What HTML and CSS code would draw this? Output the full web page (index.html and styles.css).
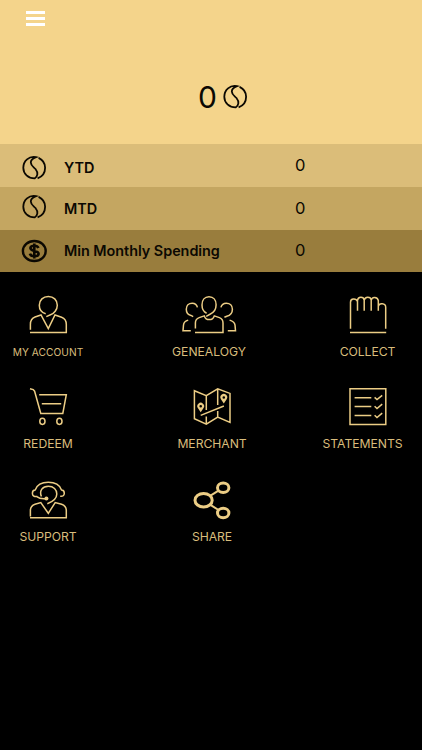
FILE: index.html
```
<!DOCTYPE html>
<html lang="en">
<head>
    <meta charset="UTF-8">
    <meta name="viewport" content="width=device-width, initial-scale=1.0">
    <title>Rewards</title>
    <link rel="stylesheet" href="styles.css">
</head>
<body>
    <!-- coin shared by the balance and the first two rows -->
    <svg width="0" height="0" class="defs">
        <symbol id="coin" viewBox="0 0 26 26">
            <path d="M15 2.2C8 .8 2.3 6 2.3 12.8C2.3 19 7.2 23.4 13.6 23.4C16.8 21.4 17.4 17.6 14.6 14.2C12.2 11.8 9.8 10.6 9.8 7.6C9.8 5.2 11.5 3.6 15 2.2Z"/>
            <path d="M17.6 2.9C21.6 4.8 24.1 8.3 24.1 12.8C24.1 17.8 21 21.8 16.6 23.4"/>
        </symbol>
    </svg>

    <header class="header">
        <button class="menu-btn" aria-label="Menu">
            <span></span>
            <span></span>
            <span></span>
        </button>
        <div class="balance">
            <span class="balance-value">0</span>
            <svg class="coin"><use href="#coin"/></svg>
        </div>
    </header>

    <section class="stats">
        <div class="stat ytd">
            <svg class="coin"><use href="#coin"/></svg>
            <span class="stat-name">YTD</span>
            <span class="stat-value">0</span>
        </div>
        <div class="stat mtd">
            <svg class="coin"><use href="#coin"/></svg>
            <span class="stat-name">MTD</span>
            <span class="stat-value">0</span>
        </div>
        <div class="stat spending">
            <svg class="coin" viewBox="0 0 26 26">
                <ellipse cx="13.3" cy="13" rx="11.4" ry="10" stroke-width="2.4"/>
                <path stroke-width="2.6" d="M17.4 10C16.8 8.3 15.4 7.7 13.3 7.7C10.9 7.7 9.4 8.6 9.4 10.1C9.4 13.9 17.6 12 17.6 15.7C17.6 17.4 15.8 18.3 13.3 18.3C10.9 18.3 9.4 17.5 8.9 15.7M13.3 5.6V20.4"/>
            </svg>
            <span class="stat-name">Min Monthly Spending</span>
            <span class="stat-value">0</span>
        </div>
    </section>

    <nav class="menu">
        <a class="item small">
            <svg viewBox="0 0 56 44">
                <path d="M25.7 21.8C21.8 20.6 19.3 17.2 19.3 13.2C19.3 8 23.2 4.4 28.3 4.4C33.5 4.4 37.3 8 37.3 13.2C37.3 17.6 34 21.6 30.5 22.8L26.3 24.6"/>
                <path d="M10.4 37.7V32.5C10.4 28 12 26 15 25L21 23L28.3 36.7L35 23L41.6 25.2C44.8 26.3 46.3 28.4 46.3 32.5V40.6H10"/>
            </svg>
            <span>MY ACCOUNT</span>
        </a>
        <a class="item genealogy">
            <svg viewBox="0 0 56 44">
                <path d="M25.6 21.2C22.6 19.8 21 16.4 21 13C21 8.2 23.7 4.8 28 4.8C32.4 4.8 35.1 8.2 35.1 12.8C35.1 17.5 32 21 29 22.3L25.2 24.3"/>
                <path d="M14.4 36.6V31C14.4 28 15.5 26.5 18.2 25.6L23.3 23.9C25 28.8 31.5 28.8 33.3 23.9L38.4 25.6C41 26.6 42 28 42 31V40.4H14"/>
                <path d="M16.4 15.4C15.8 12.6 13.8 11.2 11.2 11.2C7.8 11.2 5.3 13.6 5.3 17.2C5.3 20.4 7 22.8 10 23.4L12.2 24.6M7.2 28.1C4 29 2.8 30.3 2.5 33L2 38.7H9.8"/>
                <path d="M39.9 15.4C40.6 12.6 42.6 11.2 45.3 11.2C48.9 11.2 51.4 13.6 51.4 17.2C51.4 21 49 23.4 45.8 24.2L43.4 25.3M48.6 28.1C52.2 29.3 53.7 30.3 54 33L54.5 38.7H46.8"/>
            </svg>
            <span>GENEALOGY</span>
        </a>
        <a class="item collect">
            <svg viewBox="0 0 56 44">
                <path d="M10.5 36.7V10.2C10.5 6.4 16 6 17.5 9.5V18.7V8.5C18 4.2 23.5 4.2 24.2 8V18.7V8.3C24.8 4.2 30.6 4.2 31.2 8V18.7V8.3C31.8 4.2 37.6 4.6 38.3 8.5V18.7V14.3C39 10.8 45.7 11 45.7 15.2V36.7"/>
                <path d="M10 40.4H46.2"/>
            </svg>
            <span>COLLECT</span>
        </a>
        <a class="item">
            <svg viewBox="0 0 56 44">
                <path d="M10 4.8L13.2 5.6L14.6 7.2L20.8 29.4H42.8L46.3 10.7H19.2M21.8 19.8H41.2"/>
                <ellipse cx="22.4" cy="37.3" rx="2.6" ry="3.1"/>
                <ellipse cx="39.4" cy="37.3" rx="2.6" ry="3.1"/>
            </svg>
            <span>REDEEM</span>
        </a>
        <a class="item">
            <svg viewBox="0 0 56 44">
                <path d="M10.4 6.7L22.3 11.7L33.7 4.8L46 9.4V38.4L33.7 33L22.3 40.2L10.4 34.7ZM22.3 11.7V26M22.3 32.5V40M33.7 4.8V21M33.7 27V33M16.7 31.4L39.9 22"/>
                <path class="pin" d="M16.7 28.3L14 24.2A3.4 3.4 0 1 1 19.4 24.2ZM15.4 22.3A1.3 1.3 0 1 0 18 22.3A1.3 1.3 0 1 0 15.4 22.3Z"/>
                <path class="pin" d="M39.8 19.5L37.1 15.4A3.4 3.4 0 1 1 42.5 15.4ZM38.5 13.5A1.3 1.3 0 1 0 41.1 13.5A1.3 1.3 0 1 0 38.5 13.5Z"/>
            </svg>
            <span>MERCHANT</span>
        </a>
        <a class="item statements">
            <svg viewBox="0 0 56 44">
                <path d="M10 4.7H45.8V40.4H10ZM14.6 13.7H31.3M14.6 22.4H31.3M14.6 31.4H31.3"/>
                <path d="M34.6 13.4L37 15.6L42.2 11.3M34.6 22.3L37 24.5L42.2 20.2M34.6 31.3L37 33.5L42.2 29.2"/>
            </svg>
            <span>STATEMENTS</span>
        </a>
        <a class="item">
            <svg viewBox="0 0 56 44">
                <path d="M10.4 39.5V33.6C10.4 30 12 28.2 15 27.2L20.8 25.6L28.3 36.3L35.2 25.6L41.6 27.3C44.8 28.4 46.3 30.2 46.3 33.6V40.7H10"/>
                <path d="M21.4 19.5C19 13.5 22.5 9.3 28.4 9.3C33.6 9.3 36.8 12.7 36.8 17C36.8 21.4 33.5 24.4 27.3 26.7"/>
                <path d="M17.4 19.6C13.5 19.8 12.4 18.5 12.4 16.2C12.4 14.2 13.6 13 15.2 12.9C17 8 21.8 5.3 28.3 5.3C35 5.3 39.7 8 41.5 12.9C43.2 13 44.3 14.2 44.3 16.2C44.3 18.5 42.8 19.6 40.2 19.3M16.8 19.7C19 21.4 21.5 21.9 25 21.7"/>
                <circle class="pin" cx="26.4" cy="21.4" r="2"/>
            </svg>
            <span>SUPPORT</span>
        </a>
        <a class="item">
            <svg viewBox="0 0 56 44">
                <g stroke-width="3">
                    <ellipse cx="19.6" cy="23.2" rx="8.6" ry="6.8"/>
                    <ellipse cx="39.2" cy="10.8" rx="5.7" ry="4.7"/>
                    <ellipse cx="39.2" cy="36" rx="5.7" ry="4.7"/>
                </g>
                <path stroke-width="2" d="M26.5 18.6L34.5 13.6M26.5 27.8L34.5 33"/>
            </svg>
            <span>SHARE</span>
        </a>
    </nav>
</body>
</html>
```

FILE: styles.css
```
body {
    margin: 0;
    min-height: 100vh;
    background-color: #000;
    font-family: Inter, "Liberation Sans", sans-serif;
    color: #0b0802;
}

.defs {
    display: block;
}

.header {
    height: 144px;
    box-sizing: border-box;
    padding-top: 11px;
    background-color: #f4d48b;
}

.menu-btn {
    display: flex;
    flex-direction: column;
    gap: 3px;
    width: 19px;
    margin-left: 26px;
    padding: 0;
    border: none;
    background: none;
    cursor: pointer;
}

.menu-btn span {
    width: 100%;
    height: 3px;
    background-color: #fff;
}

.balance {
    display: flex;
    align-items: center;
    gap: 5px;
    height: 40px;
    margin-top: 51px;
    margin-left: 198px;
}

.balance-value {
    width: 19px;
    text-align: center;
    font-size: 30px;
}

.coin {
    width: 26px;
    height: 26px;
    fill: none;
    stroke: #0b0802;
    stroke-width: 1.8;
}

/* YTD / MTD / spending rows */
.stat {
    display: grid;
    grid-template-columns: 43px 231px 1fr;
    align-items: center;
    height: 43px;
    padding-left: 21px;
    box-sizing: border-box;
}

.stat-name {
    font-size: 14.4px;
    font-weight: 600;
}

.stat-value {
    padding-bottom: 2px;
    font-size: 16.5px;
}

.ytd {
    background-color: #dbbd79;
    padding-top: 4px;
}

.ytd .stat-value {
    padding-bottom: 6px;
}

.mtd {
    background-color: #c4a661;
}

.mtd .coin {
    margin-bottom: 3px;
}

.spending {
    height: 42px;
    background-color: #997d3d;
}

.spending .stat-name {
    padding-bottom: 2px;
    letter-spacing: -0.03px;
}

.menu {
    display: grid;
    grid-template-columns: 96px 232px 79px;
    grid-template-rows: 92px 93px 92px;
    padding-top: 20px;
}

.item {
    display: flex;
    flex-direction: column;
    align-items: center;
    gap: 7px;
    color: #d9bd7c;
    font-size: 12.2px;
    line-height: 18px;
    letter-spacing: -0.05px;
    white-space: nowrap;
    cursor: pointer;
}

.item svg {
    width: 56px;
    height: 44px;
    fill: none;
    stroke: #eccd85;
    stroke-width: 1.5;
}

.item .pin {
    fill: #eccd85;
    fill-rule: evenodd;
    stroke: none;
}

.small {
    font-size: 10.2px;
    letter-spacing: 0.05px;
}

.genealogy {
    margin-right: 6px;
}

.statements span {
    margin-right: 10px;
}
```
